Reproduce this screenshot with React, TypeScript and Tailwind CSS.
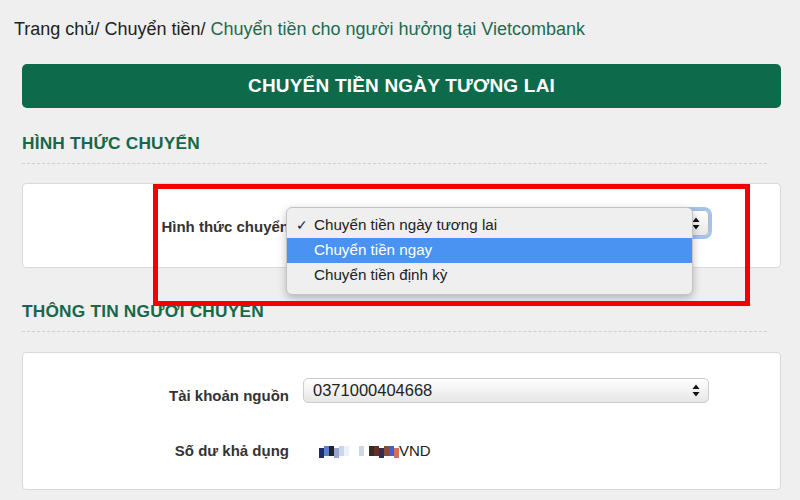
import React from "react";

const font = { fontFamily: '"Liberation Sans", Arial, sans-serif' };

const Arrows = () => (
  <svg width="8" height="13" viewBox="0 0 8 13" className="shrink-0">
    <path d="M4 0.5 L7.5 5 L0.5 5 Z" fill="#111" />
    <path d="M4 12.5 L7.5 8 L0.5 8 Z" fill="#111" />
  </svg>
);

const SectionTitle = ({ title }: { title: string }) => (
  <div className="ml-[22px] w-[745px]">
    <h3 className="font-bold text-[17.3px] leading-[20px] text-[#17674a] tracking-[0.2px]">
      {title}
    </h3>
    <div className="mt-[10px] border-t border-dashed border-[#cfcfcf]"></div>
  </div>
);

const Mosaic = () => {
  const cells = [
    "#1d2a6b", "#5a7fd0", "#20232e", "#9aa6c8", "#c8d7f0", "#eef2f8",
    "#ffffff", "#ffffff", "#d0d6e2", "#ffffff", "#3b2a24", "#6a2d24",
    "#2a2f5c", "#8b4a3a", "#3a62c8", "#d86e5a",
  ];
  return (
    <div className="flex items-center h-[14px]">
      {cells.map((c, i) => (
        <span
          key={i}
          className="inline-block w-[5px] h-[10px]"
          style={{ backgroundColor: c, marginTop: i % 3 === 0 ? 4 : 0 }}
        />
      ))}
    </div>
  );
};

export default function App() {
  return (
    <div
      className="relative w-[800px] h-[500px] overflow-hidden bg-[#efefef] text-[#222]"
      style={font}
    >
      {/* breadcrumb */}
      <div className="pl-[14px] pt-[17px] text-[18px] leading-[24px]">
        <span>Trang chủ</span>
        <span>/ </span>
        <span>Chuyển tiền</span>
        <span>/ </span>
        <span className="text-[#1c6b50]">Chuyển tiền cho người hưởng tại Vietcombank</span>
      </div>

      {/* banner */}
      <div className="ml-[22px] mt-[23px] w-[759px] h-[44px] rounded-[5px] bg-[#0d6a4a] flex items-center justify-center">
        <span className="text-white font-bold text-[19px] tracking-[0.2px]">
          CHUYỂN TIỀN NGÀY TƯƠNG LAI
        </span>
      </div>

      <div className="mt-[25px]">
        <SectionTitle title="HÌNH THỨC CHUYỂN" />
      </div>

      {/* card 1 */}
      <div className="ml-[22px] mt-[19px] w-[759px] h-[85px] bg-white border border-[#d9d9d9] rounded-[4px] flex items-start pt-[26px]">
        <div className="w-[266px] shrink-0 text-right font-bold text-[15px] leading-[20px] pt-[7px] text-[#333]">
          Hình thức chuyển
        </div>
        <div className="ml-[14px] w-[406px] h-[26px] rounded-[5px] border border-[#b8b8b8] bg-gradient-to-b from-white to-[#e8e8e8] shadow-[0_0_0_3px_#9fc4ee] flex items-center justify-end pr-[8px]">
          <Arrows />
        </div>
      </div>

      <div className="mt-[33px]">
        <SectionTitle title="THÔNG TIN NGƯỜI CHUYỂN" />
      </div>

      {/* card 2 */}
      <div className="ml-[22px] mt-[20px] w-[759px] h-[138px] bg-white border border-[#d9d9d9] rounded-[4px] pt-[25px]">
        <div className="flex items-start">
          <div className="w-[266px] shrink-0 text-right font-bold text-[15px] leading-[20px] pt-[8px] text-[#333]">
            Tài khoản nguồn
          </div>
          <div className="ml-[14px] w-[406px] h-[25px] rounded-[5px] border border-[#cdcdcd] bg-gradient-to-b from-white to-[#e6e6e6] flex items-center justify-between pl-[9px] pr-[8px] text-[16.5px]">
            <span>0371000404668</span>
            <Arrows />
          </div>
        </div>
        <div className="flex items-center mt-[34px]">
          <div className="w-[266px] shrink-0 text-right font-bold text-[15px] leading-[20px] text-[#333]">
            Số dư khả dụng
          </div>
          <div className="ml-[30px] flex items-center text-[15px]">
            <Mosaic />
            <span>VND</span>
          </div>
        </div>
      </div>

      {/* open select popup */}
      <div className="absolute left-[286px] top-[207px] w-[407px] h-[88px] rounded-[6px] bg-[#efefef] border border-[#c4c4c4] shadow-[0_3px_8px_rgba(0,0,0,0.25)] py-[5px] text-[15.2px]">
        <div className="h-[25px] flex items-center pl-[9px]">
          <span className="w-[18px] text-[14px]">✓</span>
          <span>Chuyển tiền ngày tương lai</span>
        </div>
        <div className="h-[25px] flex items-center pl-[27px] bg-[#4b93f3] text-white">
          Chuyển tiền ngay
        </div>
        <div className="h-[25px] flex items-center pl-[27px]">
          Chuyển tiền định kỳ
        </div>
      </div>

      {/* red annotation box */}
      <div className="absolute left-[153px] top-[184px] w-[597px] h-[122px] border-[5px] border-[#f20000]"></div>
    </div>
  );
}
